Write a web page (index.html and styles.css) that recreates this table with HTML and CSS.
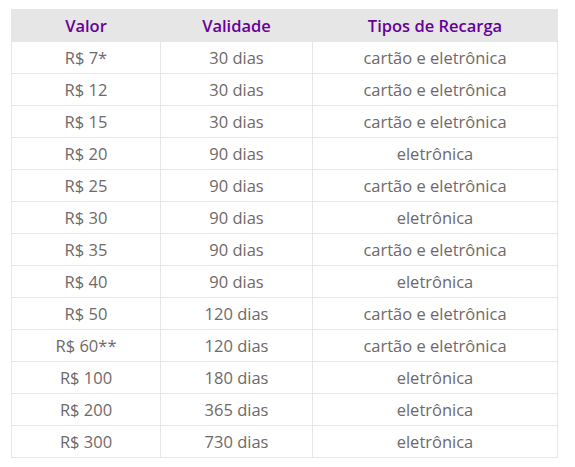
FILE: index.html
```html
<!DOCTYPE html>
<html lang="pt-BR">
<head>
<meta charset="utf-8">
<link rel="stylesheet" href="styles.css">
</head>
<body>
<table class="recarga">
  <thead>
    <tr><th class="c1">Valor</th><th class="c2">Validade</th><th class="c3">Tipos de Recarga</th></tr>
  </thead>
  <tbody>
    <tr><td>R$ 7*</td><td>30 dias</td><td>cartão e eletrônica</td></tr>
    <tr><td>R$ 12</td><td>30 dias</td><td>cartão e eletrônica</td></tr>
    <tr><td>R$ 15</td><td>30 dias</td><td>cartão e eletrônica</td></tr>
    <tr><td>R$ 20</td><td>90 dias</td><td>eletrônica</td></tr>
    <tr><td>R$ 25</td><td>90 dias</td><td>cartão e eletrônica</td></tr>
    <tr><td>R$ 30</td><td>90 dias</td><td>eletrônica</td></tr>
    <tr><td>R$ 35</td><td>90 dias</td><td>cartão e eletrônica</td></tr>
    <tr><td>R$ 40</td><td>90 dias</td><td>eletrônica</td></tr>
    <tr><td>R$ 50</td><td>120 dias</td><td>cartão e eletrônica</td></tr>
    <tr><td>R$ 60**</td><td>120 dias</td><td>cartão e eletrônica</td></tr>
    <tr><td>R$ 100</td><td>180 dias</td><td>eletrônica</td></tr>
    <tr><td>R$ 200</td><td>365 dias</td><td>eletrônica</td></tr>
    <tr><td>R$ 300</td><td>730 dias</td><td>eletrônica</td></tr>
  </tbody>
</table>
</body>
</html>
```
FILE: styles.css
```css
html, body {
  margin: 0;
  padding: 0;
  background: #ffffff;
}
body {
  padding: 9px 0 0 11px;
  font-family: "Open Sans", "Noto Sans", sans-serif;
}
.recarga {
  border-collapse: collapse;
  width: 547px;
  table-layout: fixed;
}
.recarga th, .recarga td {
  border: 1px solid #e6e6e6;
  height: 31px;
  padding: 0;
  text-align: center;
  vertical-align: middle;
  font-size: 16.5px;
  line-height: 20px;
}
.recarga th {
  background: #e6e6e6;
  color: #660099;
  font-weight: 600;
}
.recarga td {
  color: #6e6a68;
}
.c1 { width: 148px; }
.c2 { width: 151px; }
.c3 { width: auto; }
```
